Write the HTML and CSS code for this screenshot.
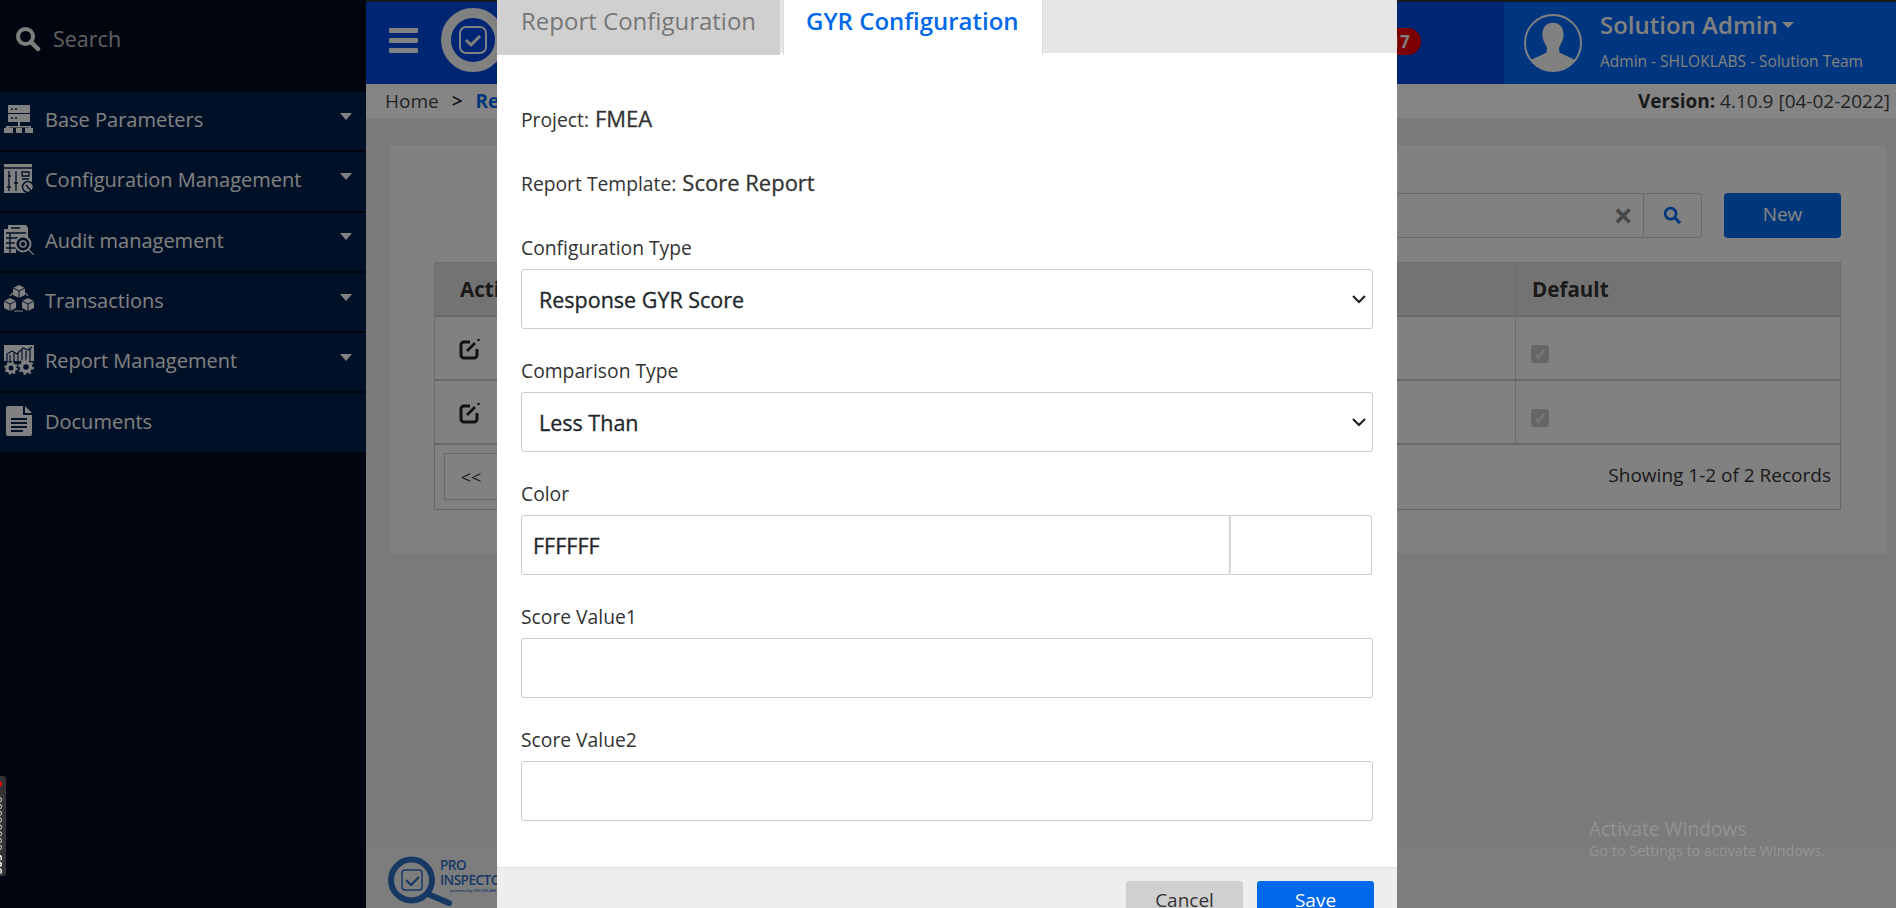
FILE: index.html
```html
<!DOCTYPE html>
<html lang="en">
<head>
  <meta charset="UTF-8" />
  <title>Report Configuration</title>
  <link rel="stylesheet" href="styles.css">
</head>
<body>

<!-- Sidebar -->
<aside class="sidebar">
  <div class="side-search">
    <svg class="side-search-icon" viewBox="0 0 26 26"><circle cx="10.5" cy="10.5" r="7.5" fill="none" stroke="currentColor" stroke-width="4"/><path d="M16 16l7 7" stroke="currentColor" stroke-width="4.5" stroke-linecap="round"/></svg>
    <span>Search</span>
  </div>
  <nav class="side-nav">
    <div class="nav-item">
      <svg class="nav-icon" viewBox="0 0 30 30"><path fill="currentColor" d="M4 1h22v8H4zM4 10h22v8H4zM14 18h2v4h11v2h2v5h-8v-5h4v-0.5h-10V24h3v5H12v-5h3v-0.5H5V24h4v5H0v-5h2v-2h12z"/><path stroke="#00204c" stroke-width="1.6" stroke-dasharray="2 2" d="M7 5h8M7 14h8"/></svg>
      <span class="nav-label">Base Parameters</span><i class="nav-caret"></i>
    </div>
    <div class="nav-item">
      <svg class="nav-icon" viewBox="0 0 30 30"><path fill="currentColor" d="M0 0h28v24h-6v5H0z"/><path fill="none" stroke="#00204c" stroke-width="1.3" d="M0 4h28M5 7v20M12 7v20M4 12h3M10 19h4M3 23h4M18 8h7v4h-7zM18 15h7"/><circle cx="24" cy="23" r="5.5" fill="currentColor" stroke="#00204c" stroke-width="1.5"/><path stroke="#00204c" stroke-width="1.5" d="M22 21l6 7"/></svg>
      <span class="nav-label">Configuration Management</span><i class="nav-caret"></i>
    </div>
    <div class="nav-item">
      <svg class="nav-icon" viewBox="0 0 30 30"><path fill="currentColor" d="M4 0h18l2 3v9H12v16H0V4h4z"/><path stroke="#00204c" stroke-width="1.3" d="M7 3h9M2 8h20M2 13h10M2 18h10M2 23h10M6 8v20"/><circle cx="19" cy="19" r="7.5" fill="none" stroke="currentColor" stroke-width="2"/><circle cx="19" cy="19" r="3" fill="none" stroke="currentColor" stroke-width="1.6"/><path stroke="currentColor" stroke-width="1.2" d="M25 25l5 5"/></svg>
      <span class="nav-label">Audit management</span><i class="nav-caret"></i>
    </div>
    <div class="nav-item">
      <svg class="nav-icon" viewBox="0 0 30 30"><path fill="none" stroke="currentColor" stroke-width="1.2" d="M6 11a11 11 0 0 1 18 0M10 26h9"/><path fill="currentColor" d="M15 0l6 3v7l-6 3-6-3V3zM6 13l6 3v7l-6 3-6-3v-7zM24 13l6 3v7l-6 3-6-3v-7z"/><path fill="none" stroke="#00204c" stroke-width="1" d="M9 3l6 3 6-3M15 6v7M0 16l6 3 6-3M6 19v7M18 16l6 3 6-3M24 19v7"/></svg>
      <span class="nav-label">Transactions</span><i class="nav-caret"></i>
    </div>
    <div class="nav-item">
      <svg class="nav-icon" viewBox="0 0 30 30"><path fill="currentColor" d="M0 0h30v16H0z"/><path fill="none" stroke="#00204c" stroke-width="1.2" d="M3 16V9l5-3 5 3 6-6 5 2 4-3M6 16V10M10 16V8M14 16V8M18 16V5M22 16V6M26 16V4"/><circle cx="7" cy="23" r="4" fill="none" stroke="currentColor" stroke-width="3"/><circle cx="7" cy="23" r="6" fill="none" stroke="currentColor" stroke-width="1.6" stroke-dasharray="2 2.7"/><circle cx="22" cy="22" r="4.5" fill="none" stroke="currentColor" stroke-width="3.4"/><circle cx="22" cy="22" r="7" fill="none" stroke="currentColor" stroke-width="1.8" stroke-dasharray="2.5 3"/></svg>
      <span class="nav-label">Report Management</span><i class="nav-caret"></i>
    </div>
    <div class="nav-item">
      <svg class="nav-icon" viewBox="0 0 30 30"><path fill="currentColor" d="M4 0h15v9h9v19a2 2 0 0 1-2 2H4a2 2 0 0 1-2-2V2a2 2 0 0 1 2-2zM21 0l7 7h-7z"/><path stroke="#00204c" stroke-width="1.8" d="M7 13h16M7 17h16M7 21h16M7 25h12"/></svg>
      <span class="nav-label">Documents</span>
    </div>
  </nav>
</aside>

<div class="debug-tab"><b>S03</b> 00000000<i class="debug-dot"></i></div>

<!-- Main page -->
<div class="page">
  <header class="topbar">
    <div class="topbar-left">
      <div class="burger"><i></i><i></i><i></i></div>
      <div class="logo-ring">
        <svg class="logo-check" viewBox="0 0 28 28"><rect x="1" y="1" width="26" height="26" rx="6" fill="none" stroke="currentColor" stroke-width="2"/><path d="M7 14l5 5 9-9" fill="none" stroke="currentColor" stroke-width="3"/></svg>
      </div>
    </div>
    <div class="topbar-mid"><span class="badge">17</span></div>
    <div class="user-box">
      <svg class="avatar" viewBox="0 0 60 60"><defs><clipPath id="avatarClip"><circle cx="30" cy="30" r="29"/></clipPath></defs><circle cx="30" cy="30" r="29" fill="none" stroke="currentColor" stroke-width="2"/><path clip-path="url(#avatarClip)" fill="currentColor" d="M30 9c7 0 11 5 11 12 0 5-2 9-4 12-1 2-1 5 0 7l15 7v13H8V47l15-7c1-2 1-5 0-7-2-3-4-7-4-12 0-7 4-12 11-12z"/></svg>
      <div class="user-text">
        <div class="user-name">Solution Admin<i class="user-caret"></i></div>
        <div class="user-role">Admin - SHLOKLABS - Solution Team</div>
      </div>
    </div>
  </header>

  <div class="crumbs">
    <div>Home <span class="crumb-sep">&gt;</span> <a class="crumb-link">Report Configuration</a></div>
    <div><b>Version:</b> 4.10.9 [04-02-2022]</div>
  </div>

  <main class="content">
    <section class="card">
      <div class="card-tools">
        <div class="search-box">
          <span class="search-clear">&times;</span>
        </div>
        <div class="search-btn">
          <svg viewBox="0 0 20 20" width="19" height="19"><circle cx="8" cy="8" r="5.8" fill="none" stroke="currentColor" stroke-width="2.8"/><path d="M12.5 12.5l5.5 5.5" stroke="currentColor" stroke-width="3.2"/></svg>
        </div>
        <button class="new-btn">New</button>
      </div>

      <table class="data-table">
        <thead>
          <tr><th class="col-action">Action</th><th>Report Template</th><th class="col-default">Default</th></tr>
        </thead>
        <tbody>
          <tr>
            <td>
              <svg class="edit-icon" viewBox="0 0 22 22"><path d="M12 4H6a3 3 0 0 0-3 3v10a3 3 0 0 0 3 3h10a3 3 0 0 0 3-3v-6" fill="none" stroke="currentColor" stroke-width="3"/><path d="M9 13l8-8" stroke="currentColor" stroke-width="2.6"/><circle cx="20.5" cy="2" r="1.3" fill="currentColor"/></svg>
            </td>
            <td>Score Report</td>
            <td class="cell-check"><span class="check-box">&#10003;</span></td>
          </tr>
          <tr>
            <td>
              <svg class="edit-icon" viewBox="0 0 22 22"><path d="M12 4H6a3 3 0 0 0-3 3v10a3 3 0 0 0 3 3h10a3 3 0 0 0 3-3v-6" fill="none" stroke="currentColor" stroke-width="3"/><path d="M9 13l8-8" stroke="currentColor" stroke-width="2.6"/><circle cx="20.5" cy="2" r="1.3" fill="currentColor"/></svg>
            </td>
            <td>Score Report</td>
            <td class="cell-check"><span class="check-box">&#10003;</span></td>
          </tr>
        </tbody>
        <tfoot>
          <tr>
            <td colspan="3">
              <div class="pager-row">
                <span class="pager-btn">&lt;&lt;</span>
                <span class="pager-info">Showing 1-2 of 2 Records</span>
              </div>
            </td>
          </tr>
        </tfoot>
      </table>
    </section>
  </main>

  <footer class="page-foot">
    <svg class="foot-logo" viewBox="0 0 52 52"><circle cx="23.5" cy="25" r="20.5" fill="none" stroke="currentColor" stroke-width="6"/><rect x="14" y="15" width="20" height="20" rx="3" fill="none" stroke="currentColor" stroke-width="1.5"/><path d="M18 25l5 5 8-8" fill="none" stroke="currentColor" stroke-width="2.2"/><path d="M42 40l19 8" stroke="currentColor" stroke-width="6" stroke-linecap="round"/></svg>
    <div class="foot-text">
      <div>PRO</div>
      <div>INSPECTOR</div>
      <small>powered by SHLOKLABS</small>
    </div>
  </footer>
</div>

<!-- Config modal -->
<div class="overlay">
  <div class="modal">
    <div class="tabs">
      <div class="tab">Report Configuration</div>
      <div class="tab tab-active">GYR Configuration</div>
    </div>
    <div class="modal-body">
      <div class="info-row">Project: <strong>FMEA</strong></div>
      <div class="info-row">Report Template: <strong>Score Report</strong></div>

      <div class="field">
        <label>Configuration Type</label>
        <select class="control"><option>Response GYR Score</option></select>
      </div>
      <div class="field">
        <label>Comparison Type</label>
        <select class="control"><option>Less Than</option></select>
      </div>
      <div class="field">
        <label>Color</label>
        <div class="color-group">
          <input class="control color-text" type="text" value="FFFFFF">
          <div class="color-swatch"></div>
        </div>
      </div>
      <div class="field">
        <label>Score Value1</label>
        <input class="control" type="text">
      </div>
      <div class="field">
        <label>Score Value2</label>
        <input class="control" type="text">
      </div>
    </div>
    <div class="modal-foot">
      <button class="btn-cancel">Cancel</button>
      <button class="btn-save">Save</button>
    </div>
  </div>
</div>

<div class="activate">
  <div class="activate-title">Activate Windows</div>
  <div class="activate-sub">Go to Settings to activate Windows.</div>
</div>

</body>
</html>
```

FILE: styles.css
```css
* {
  margin: 0;
  padding: 0;
  box-sizing: border-box;
}

html, body {
  height: 100%;
  overflow: hidden;
}

body {
  display: flex;
  font-family: "Open Sans", sans-serif;
  background-color: #ececec;
  color: #333;
}

/* Sidebar */
.sidebar {
  width: 366px;
  flex-shrink: 0;
  background-color: #000a20;
  color: #f7f7f7;
}

.side-search {
  height: 92px;
  padding: 0 0 15px 15px;
  display: flex;
  align-items: center;
  gap: 12px;
  font-size: 21.5px;
  color: #bcbcbc;
}

.side-search-icon {
  width: 26px;
  height: 26px;
  color: #f0f0f0;
}

.side-nav {
  display: flex;
  flex-direction: column;
  gap: 2px;
}

.nav-item {
  height: 58.3px;
  background-color: #00204c;
  display: flex;
  align-items: center;
  padding-left: 4px;
  font-size: 20px;
  position: relative;
}

.nav-icon {
  width: 30px;
  height: 30px;
  margin-right: 11px;
  margin-top: -4px;
  flex-shrink: 0;
}

.nav-label {
  flex: 1;
  margin-top: -3px;
}

.nav-caret {
  width: 0;
  height: 0;
  border-left: 6.5px solid transparent;
  border-right: 6.5px solid transparent;
  border-top: 7px solid #f7f7f7;
  margin-right: 14px;
  margin-top: -10px;
}

.debug-tab {
  position: absolute;
  left: -16px;
  top: 776px;
  width: 22px;
  height: 100px;
  background-color: #333;
  border-radius: 3px;
  color: #ddd;
  font-size: 11px;
  letter-spacing: 0.5px;
  writing-mode: vertical-rl;
  transform: rotate(180deg);
  white-space: nowrap;
  line-height: 28px;
  overflow: hidden;
  z-index: 20;
  padding-top: 2px;
}

.debug-tab b {
  color: #fff;
}

.debug-dot {
  position: absolute;
  left: 4px;
  top: 89px;
  width: 8px;
  height: 6px;
  border-radius: 50%;
  background-color: #f00;
}

/* Main page */
.page {
  flex: 1;
  min-width: 0;
  display: flex;
  flex-direction: column;
  height: 100%;
}

.topbar {
  height: 84px;
  border-top: 2px solid #333;
  display: flex;
  background-color: #0049dd;
  color: #f7f7f7;
}

.topbar-left {
  display: flex;
  align-items: center;
  padding-left: 23px;
  gap: 23px;
  width: 240px;
  margin-top: -6px;
}

.burger {
  width: 29px;
}

.burger i {
  display: block;
  height: 5px;
  background-color: #f7f7f7;
  margin-bottom: 5px;
  border-radius: 1px;
}

.burger i:last-child {
  margin-bottom: 0;
}

.logo-ring {
  width: 64px;
  height: 64px;
  border-radius: 50%;
  background-color: #0049dd;
  border: 10px solid #f7f7f7;
  display: flex;
  align-items: center;
  justify-content: center;
  flex-shrink: 0;
}

.logo-check {
  width: 28px;
  height: 28px;
}

.topbar-mid {
  flex: 1;
  display: flex;
  justify-content: flex-end;
  padding: 26px 83px 0 0;
}

.badge {
  height: 27px;
  min-width: 42px;
  border-radius: 14px;
  background-color: #f00000;
  font-size: 17px;
  font-weight: 700;
  text-align: center;
  line-height: 27px;
}

.user-box {
  width: 392px;
  background-color: #0068f4;
  display: flex;
  align-items: center;
  padding-left: 20px;
  gap: 18px;
  color: #f7f7f7;
}

.avatar {
  width: 58px;
  height: 58px;
  flex-shrink: 0;
}

.user-text {
  margin-top: -4px;
}

.user-name {
  font-size: 24px;
  font-weight: 600;
  line-height: 30px;
  display: flex;
  align-items: center;
  gap: 4px;
}

.user-caret {
  width: 0;
  height: 0;
  border-left: 6.5px solid transparent;
  border-right: 6.5px solid transparent;
  border-top: 6px solid #f7f7f7;
}

.user-role {
  font-size: 15.5px;
  line-height: 22px;
  margin-top: 10px;
}

.crumbs {
  height: 34px;
  background-color: #fff;
  display: flex;
  align-items: center;
  justify-content: space-between;
  padding: 0 6px 0 19px;
  font-size: 19px;
  color: #444;
}

.crumbs b {
  color: #333;
}

.crumb-sep {
  color: #222;
  font-weight: 600;
  margin: 0 8px;
}

.crumb-link {
  color: #0069ea;
  font-weight: 700;
}

.content {
  flex: 1;
  padding: 26px 9px 0 23px;
}

.card {
  height: 411px;
  background-color: #f8f8f8;
  border: 1px solid #eaeaea;
  padding: 48px 45px 0 44px;
}

.card-tools {
  display: flex;
  justify-content: flex-end;
  height: 45px;
  margin-bottom: 24px;
}

.search-box {
  width: 500px;
  border: 1px solid #ccc;
  border-radius: 4px 0 0 4px;
  display: flex;
  align-items: center;
  justify-content: flex-end;
  padding: 0 10px 2px 0;
}

.search-clear {
  font-size: 34px;
  font-weight: 700;
  color: #888;
  line-height: 1;
}

.search-btn {
  width: 58px;
  border: 1px solid #ccc;
  border-left: none;
  border-radius: 0 4px 4px 0;
  color: #0069ea;
  display: flex;
  align-items: center;
  justify-content: center;
}

.new-btn {
  width: 117px;
  margin-left: 22px;
  padding-bottom: 4px;
  background-color: #0069ea;
  border: none;
  border-radius: 4px;
  color: #fff;
  font-family: "Open Sans", sans-serif;
  font-size: 19px;
}

.data-table {
  width: 100%;
  border-collapse: collapse;
  border: 1px solid #c4c4c4;
  font-size: 19px;
}

.data-table th {
  height: 53px;
  background-color: #dcdcdc;
  border: 1px solid #d0d0d0;
  border-bottom: 2px solid #ccc;
  padding: 0 25px;
  text-align: left;
  font-size: 20.6px;
  font-weight: 700;
  color: #333;
}

.data-table th.col-action {
  width: 200px;
}

.data-table th.col-default {
  width: 325px;
  padding-left: 16px;
}

.data-table td {
  height: 64px;
  border: 1px solid #d0d0d0;
  border-bottom: 2px solid #c8c8c8;
  padding-left: 23px;
  color: #222;
}

.data-table tfoot td {
  height: 66px;
  border: none;
  border-top: 1px solid #d0d0d0;
  padding: 0 9px;
}

.edit-icon {
  width: 22px;
  height: 22px;
  margin-top: 2px;
  color: #222;
  display: block;
}

.data-table td.cell-check {
  padding: 12px 0 0 15px;
}

.check-box {
  display: block;
  width: 18px;
  height: 18px;
  border-radius: 3px;
  background-color: #c4c4c4;
  color: #e4e4e4;
  font-size: 16px;
  font-weight: 700;
  line-height: 18px;
  text-align: center;
}

.pager-row {
  display: flex;
  justify-content: space-between;
  align-items: center;
  color: #333;
}

.pager-btn {
  width: 54px;
  height: 47px;
  border: 1px solid #ccc;
  display: flex;
  align-items: center;
  justify-content: center;
  font-size: 18px;
}

.pager-info {
  padding-bottom: 3px;
}

.page-foot {
  height: 60px;
  background-color: #f0f0f0;
  display: flex;
  align-items: flex-start;
  padding: 7px 0 0 22px;
  color: #2f6cc0;
}

.foot-logo {
  width: 52px;
  height: 52px;
  overflow: visible;
}

.foot-text {
  font-size: 13.5px;
  font-weight: 600;
  letter-spacing: -0.5px;
  line-height: 15px;
  padding-top: 3px;
}

.foot-text small {
  display: block;
  font-size: 4px;
  letter-spacing: 0;
  line-height: 6px;
  padding-left: 10px;
}

/* Modal over the dimmed page */
.overlay {
  position: fixed;
  inset: 0;
  background-color: rgba(0, 0, 0, 0.48);
  z-index: 10;
}

.modal {
  position: absolute;
  left: 497px;
  top: 0;
  width: 900px;
  background-color: #fff;
}

.tabs {
  height: 53px;
  display: flex;
  background-color: #e6e6e6;
}

.tab {
  width: 283px;
  height: 55px;
  background-color: #d0d0d0;
  color: #777;
  font-size: 24px;
  line-height: 42px;
  padding-left: 24px;
}

.tab-active {
  width: 259.5px;
  margin-left: 3px;
  background-color: #fff;
  border-left: 1px solid #ddd;
  border-right: 1px solid #ddd;
  color: #0069ea;
  font-weight: 600;
  padding-left: 22px;
}

.modal-body {
  padding: 52px 24px 46px;
}

.info-row {
  height: 26px;
  margin-bottom: 38px;
  line-height: 26px;
  font-size: 19.3px;
  color: #333;
}

.info-row + .info-row {
  margin-bottom: 40px;
}

.info-row strong {
  font-size: 22px;
  font-weight: 400;
  -webkit-text-stroke: 0.3px #333;
  margin-left: 1px;
}

.field {
  margin-bottom: 29px;
}

.field:last-child {
  margin-bottom: 0;
}

.field label {
  display: block;
  height: 26px;
  line-height: 26px;
  margin-bottom: 8px;
  font-size: 19.3px;
  color: #333;
}

.control {
  display: block;
  width: 100%;
  height: 60px;
  padding: 0 11px;
  background-color: #fff;
  border: 1px solid #ccc;
  border-radius: 3px;
  font-family: "Open Sans", sans-serif;
  font-size: 21.5px;
  font-weight: 400;
  -webkit-text-stroke: 0.3px #212529;
  color: #212529;
}

select.control {
  appearance: none;
  padding-left: 17px;
  background-image: url("data:image/svg+xml,%3Csvg xmlns='http://www.w3.org/2000/svg' viewBox='0 0 14 9'%3E%3Cpath d='M1 1l6 6 6-6' fill='none' stroke='%23222' stroke-width='2.2'/%3E%3C/svg%3E");
  background-repeat: no-repeat;
  background-position: right 6px center;
  background-size: 14px 9px;
}

.color-group {
  display: flex;
}

.color-text {
  flex: 1;
  border-radius: 3px 0 0 3px;
}

.color-swatch {
  width: 142px;
  height: 60px;
  margin-right: 1px;
  border: 1px solid #ccc;
  border-left-color: #ddd;
  border-radius: 0 3px 3px 0;
}

.modal-foot {
  height: 90px;
  background-color: #eee;
  border-top: 1px solid #e0e0e0;
  display: flex;
  justify-content: flex-end;
  gap: 14px;
  padding: 13px 23px 0 0;
}

.modal-foot button {
  width: 117px;
  height: 38px;
  border: none;
  border-radius: 3px;
  font-family: "Open Sans", sans-serif;
  font-size: 19px;
}

.btn-cancel {
  background-color: #d0d0d0;
  color: #333;
}

.btn-save {
  background-color: #0069ea;
  color: #fff;
}

/* Windows watermark */
.activate {
  position: fixed;
  left: 1589px;
  top: 816px;
  z-index: 30;
  color: rgba(255, 255, 255, 0.18);
}

.activate-title {
  font-size: 19.2px;
  line-height: 25px;
}

.activate-sub {
  font-size: 14.4px;
  line-height: 20px;
}
```
